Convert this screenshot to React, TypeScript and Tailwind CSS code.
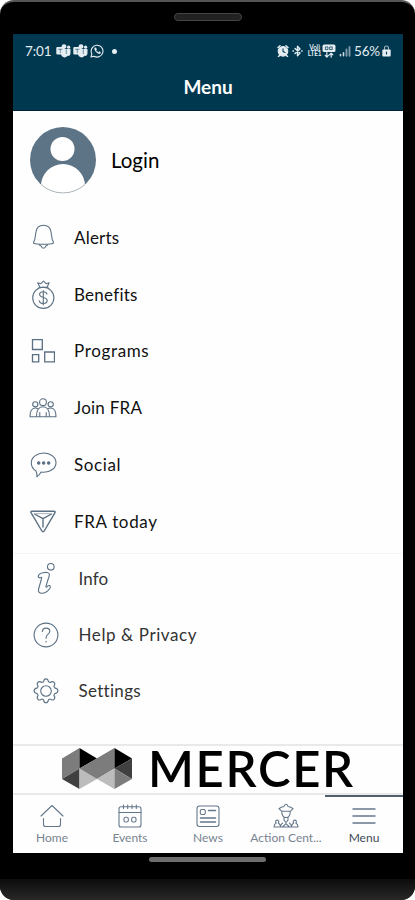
import type { ReactNode } from "react";

function Glyph({ box, className, children }: { box: string; className: string; children: ReactNode }) {
  return (
    <svg viewBox={box} className={className} fill="none" stroke="currentColor" strokeWidth="1.1" strokeLinecap="round" strokeLinejoin="round">
      {children}
    </svg>
  );
}

function Teams() {
  return (
    <Glyph box="0 0 15 14" className="h-[14px] w-[15px] shrink-0">
      <g fill="currentColor" stroke="none">
        <circle cx="8" cy="2.6" r="2.4" />
        <circle cx="12.6" cy="3.2" r="1.6" />
        <path d="M5 5h9.5v4.5a2.5 2.5 0 0 1-3 2.3A3.6 3.6 0 0 1 5 10.500z" />
        <rect x="0.300" y="3" width="8" height="7.500" rx="1" />
      </g>
      <path d="M2.500 5.300h3.600M4.300 5.300v3.400M10.300 5.600v4" stroke="#003850" strokeWidth="0.500" />
    </Glyph>
  );
}

function StatusBar() {
  return (
    <div className="flex h-[34px] shrink-0 items-center pl-[12px] pr-[12px] text-[#e4edf2]">
      <span className="w-[27px] whitespace-nowrap text-[13.5px] tracking-[-0.1px]">7:01</span>
      <div className="ml-[4px] flex items-center gap-[2px]">
        <Teams />
        <Teams />
        <Glyph box="0 0 14 14" className="h-[14px] w-[14px]">
          <path d="M1 13l.8-3.200A5.900 5.900 0 1 1 4 12.200z" />
          <path d="M4.700 4c-.7 1.800 2 5.400 4.800 5.700 1.200-.2 1.200-1.200.8-1.500l-1.200-.6-.8.8C7.200 8 6.400 7.200 6 6.200l.6-.8L6 4.100z" fill="currentColor" strokeWidth="0.500" />
        </Glyph>
      </div>
      <span className="ml-[8px] h-[5px] w-[5px] rounded-full bg-[#e4edf2]" />
      <div className="ml-auto flex items-center">
        <Glyph box="0 0 12 12" className="h-[12px] w-[12px]">
          <circle cx="6" cy="6.300" r="4.800" fill="currentColor" />
          <path d="M1 2.500l2-1.700M11 2.500L9 .8M2.500 10.500l-1 1M9.500 10.500l1 1" strokeWidth="1.500" />
          <path d="M6 3.800v2.800l2 1" stroke="#003850" />
        </Glyph>
        <Glyph box="0 0 11 12" className="ml-[3px] h-[12px] w-[11px]">
          <path d="M3 3.500l5 4.500-2.500 2.700V1.300L8 4 3 8.500" strokeWidth="1.400" />
          <path d="M1 6h.5M9.700 6h.4" strokeWidth="1.500" />
        </Glyph>
        <div className="ml-[4px] flex w-[15px] flex-col items-center text-[6.5px] font-bold leading-[6px] tracking-[-0.1px]">
          <span>Vo))</span>
          <span>LTE1</span>
        </div>
        <Glyph box="0 0 13 13" className="h-[14px] w-[14px]">
          <rect x="0.500" y="0.500" width="12" height="7" rx="1.500" fill="currentColor" stroke="none" />
          <path d="M3.500 2.700h2v2.500h-2zM7.500 2.700h2v2.500h-2z" stroke="#003850" strokeWidth="0.700" />
          <path d="M4.500 8v4M3 10.500l1.500 1.700L6 10.500M8.500 12.200V8.500M7 10l1.500-1.500L10 10" />
        </Glyph>
        <Glyph box="0 0 12 11" className="ml-[3px] h-[11px] w-[12px]">
          <path d="M1.500 9.800v-1.300M4.500 9.800V6.700" strokeWidth="1.600" opacity="0.900" />
          <path d="M7.500 9.800V3.500M10.500 9.800V1" strokeWidth="1.900" opacity="0.550" />
        </Glyph>
        <span className="ml-[3px] whitespace-nowrap text-[13.5px] tracking-[-0.2px]">56%</span>
        <Glyph box="0 0 9 12" className="ml-[2px] h-[12px] w-[9px]">
          <path d="M2.500 5V3a2 2 0 0 1 4 0v2" opacity="0.700" />
          <rect x="0.300" y="4.500" width="8.400" height="7" rx="1" fill="currentColor" stroke="none" />
          <path d="M4.500 7v2" stroke="#003850" />
        </Glyph>
      </div>
    </div>
  );
}

const bell = (
  <Glyph box="0 0 24 28" className="h-[28px] w-[24px]">
    <path d="M2.700 20.300V18.500L3.700 17l1.300-8C5.600 4.800 8.300 2.300 12.500 2.300S19.400 4.800 20 9l1.300 8 1 1.500v1.800c-3.200 1.300-16.400 1.300-19.600 0z" />
    <path d="M8.300 21.500c.2 1.200 1.200 1.300 1.900 1.500.3 1.300 1 2.200 2.300 2.200s2-.9 2.300-2.200c.7-.2 1.700-.3 1.900-1.500" />
  </Glyph>
);
const bag = (
  <Glyph box="0 0 24 29" className="h-[29px] w-[24px]">
    <circle cx="12.300" cy="17.800" r="10.600" />
    <path d="M8.800 7.300L6.800 2.700l3 1L12.500 1.200l2.600 2.500 3-1-2 4.600" />
    <path d="M8 7.300h9" />
    <path d="M16 14c-.5-1.500-1.800-2.200-3.700-2.200-2.100 0-3.700.9-3.700 2.700 0 3.900 7.600 2.100 7.600 6 0 2-1.800 3-3.900 3-2.300 0-3.700-.9-4.100-2.700M12.300 10.500v14.500" />
  </Glyph>
);
const squares = (
  <Glyph box="0 0 24 24" className="h-[24px] w-[24px]">
    <g strokeLinejoin="miter" strokeWidth="1.300">
      <path d="M1.500 .700h9.800v9.800H1.500zM13.700 13h9.800v9.800h-9.800zM1.500 15.700h6.200v7.100H1.500z" />
    </g>
  </Glyph>
);
const people = (
  <Glyph box="0 0 28 20" className="h-[20px] w-[28px]">
    <circle cx="14" cy="4.200" r="3.400" />
    <circle cx="6.300" cy="6.300" r="2.600" />
    <circle cx="21.700" cy="6.300" r="2.600" />
    <path d="M7.500 18.700c0-6 2-10 6.500-10s6.500 4 6.500 10M1 18.700c0-4.700 1.500-8.700 5.300-8.700 1.300 0 2.200.3 3 .9M27 18.700c0-4.700-1.500-8.700-5.300-8.700-1.300 0-2.200.3-3 .9M1 18.700h26M10.800 18.500v-4M17.200 18.500v-4" />
  </Glyph>
);
const chat = (
  <Glyph box="0 0 27 26" className="h-[26px] w-[27px]">
    <path d="M6 19C3 17.300 1.300 14.400 1.300 10.800 1.300 5.300 6.900 1 13.700 1S26 5.300 26 10.800s-5.500 9.400-12.300 9.400c-1 0-1.800 0-2.600-.2-1.300 2.200-2.400 3.600-4.200 4.800.2-2.100 0-4-.9-5.800z" />
    <g fill="currentColor"><circle cx="8.700" cy="11" r="1.200" /><circle cx="13.700" cy="11" r="1.200" /><circle cx="18.700" cy="11" r="1.200" /></g>
  </Glyph>
);
const triangle = (
  <Glyph box="0 0 26 23" className="h-[23px] w-[26px]">
    <path d="M2 1.200h22c1 0 1.400.7 1 1.500L14.200 21c-.6 1-1.700 1-2.300 0L1 2.700C.6 1.900 1 1.200 2 1.200z" strokeWidth="1.400" />
    <path d="M4.500 4l8.500 4.700L21.500 4M13 8.700V17" strokeWidth="1.400" />
    <path d="M6 3.600h14" strokeWidth="0.500" />
  </Glyph>
);
const info = (
  <Glyph box="0 0 20 34" className="mr-[2px] h-[34px] w-[20px]">
    <circle cx="15.800" cy="4.800" r="3.300" />
    <path d="M3.200 14.500c.2-1.800 1.800-3.200 4.600-3.800 3.300-.8 6.500-.3 6.600 1.900 0 1.400-.6 2.900-1.200 4.400l-2.200 7.200c-.3 1 .2 1.200.9.600.7-.7 1.800-1.500 2.700-1.200 1.100.4.900 1.700.1 2.900-1.700 2.600-4.800 4.700-7.800 4.700-2.700 0-4-1.500-3.300-4.200l3-10.700c.3-1-.1-1.300-.8-.8-.8.500-2.300.2-2.600-1z" />
  </Glyph>
);
const help = (
  <Glyph box="0 0 26 26" className="h-[26px] w-[26px]">
    <circle cx="13" cy="13" r="11.900" />
    <path d="M9.300 9.500c.2-2.200 1.600-3.400 3.800-3.400 2.100 0 3.700 1.200 3.700 3.200 0 2.800-3.700 3-3.700 6.400v.6M13.100 19.300v.6" />
  </Glyph>
);
const gear = (
  <Glyph box="0 0 26 26" className="h-[26px] w-[26px]">
    <circle cx="13" cy="13" r="5.300" />
    <path d="M10.500 3.800c.3-1.700.8-2.900 2.500-2.900s2.200 1.200 2.500 2.900l1.700.7c1.400-1 2.700-1.400 3.900-.2s.8 2.500-.2 3.900l.7 1.700c1.700.3 3.300.9 3.300 2.900s-1.600 2.600-3.300 2.900l-.7 1.700c1 1.400 1.400 2.700.2 3.900s-2.500.8-3.900-.2l-1.700.7c-.3 1.700-.8 2.900-2.500 2.900s-2.200-1.200-2.500-2.900l-1.700-.7c-1.400 1-2.700 1.400-3.900.2s-.8-2.500.2-3.900l-.7-1.700C2.700 15.400 1.100 14.800 1.100 12.800s1.600-2.600 3.300-2.900l.7-1.700c-1-1.400-1.400-2.700-.2-3.900s2.500-.8 3.900.2z" />
  </Glyph>
);

const mainItems = [
  { label: "Alerts", icon: bell, track: "tracking-[0.2px]" },
  { label: "Benefits", icon: bag, track: "tracking-[0.25px]" },
  { label: "Programs", icon: squares, track: "tracking-[0.65px]" },
  { label: "Join FRA", icon: people, track: "tracking-[0.25px]" },
  { label: "Social", icon: chat, track: "tracking-[0.6px]" },
  { label: "FRA today", icon: triangle, track: "tracking-[0.65px]" },
];
const moreItems = [
  { label: "Info", icon: info, track: "tracking-[0.1px]" },
  { label: "Help & Privacy", icon: help, track: "tracking-[0.6px]" },
  { label: "Settings", icon: gear, track: "tracking-[0.3px]" },
];

const tabs = [
  {
    label: "Home",
    icon: (
      <Glyph box="0 0 24 24" className="h-[24px] w-[24px]">
        <path d="M1 12L12 1.500 23 12M3.500 14.500v6c0 1.200.8 2 2 2h13c1.200 0 2-.8 2-2v-6" />
      </Glyph>
    ),
  },
  {
    label: "Events",
    icon: (
      <Glyph box="0 0 24 24" className="h-[24px] w-[24px]">
        <rect x="1" y="2.700" width="22" height="20.300" rx="2" />
        <path d="M1 8.500h22M5.500 1v3.500M9.700 1v3.500M14 1v3.500M18.300 1v3.500" />
        <rect x="6" y="13.200" width="4.300" height="4.800" rx="1.500" />
        <rect x="13.700" y="13.200" width="4.300" height="4.800" rx="1.500" />
      </Glyph>
    ),
  },
  {
    label: "News",
    icon: (
      <Glyph box="0 0 24 24" className="h-[24px] w-[24px]">
        <rect x="1" y="2" width="22" height="20.500" rx="2.500" />
        <rect x="4.300" y="5.500" width="5" height="5" rx="1.500" />
        <path d="M12.500 6.500h7M4.500 14h15M4.500 18h15" strokeWidth="1.500" />
      </Glyph>
    ),
  },
  {
    label: "Action Cent...",
    icon: (
      <Glyph box="0 0 26 25" className="h-[25px] w-[26px]">
        <path d="M11 3.500c.3-1.300 1-2.300 2-2.300s1.700 1 2 2.300c2 .2 3.700.9 5 2.200l-2.500 2.500h-9L6 5.700c1.300-1.300 3-2 5-2.200zM8.700 8.200c0 3.600 1.600 6.300 4.300 6.300s4.300-2.700 4.300-6.300M11 14.500v2.700l2 2.300 2-2.300v-2.700" />
        <path d="M1 24c0-2 .8-3.300 2.200-4a1.600 1.600 0 1 1 2 0c1 .5 1.800 1.500 2.300 3 .5-1.500 1.100-2.500 2.200-3M25 24c0-2-.8-3.300-2.200-4a1.600 1.600 0 1 0-2 0c-1 .5-1.800 1.500-2.300 3-.5-1.500-1.100-2.500-2.200-3M1 24h24M9.500 24l3.500-3.300 3.500 3.300" />
      </Glyph>
    ),
  },
  {
    label: "Menu",
    icon: (
      <Glyph box="0 0 24 24" className="h-[24px] w-[24px]">
        <path d="M1 5h22M1 12h22M1 19h22" strokeWidth="1.400" />
      </Glyph>
    ),
  },
];

function Mercer() {
  return (
    <svg viewBox="0 0 70 41" className="h-[41px] w-[70px] shrink-0">
      <path d="M0 10.500L17.500 0v20.500L0 31z" fill="#7c7c7c" />
      <path d="M17.500 0L35 10.500 17.500 20.500z" fill="#000" />
      <path d="M0 31l17.500-10.500V41z" fill="#404040" />
      <path d="M17.500 20.500L35 31 17.500 41z" fill="#bcbcbc" />
      <path d="M17.500 20.500L52.500 0v20.500L35 31z" fill="#7c7c7c" />
      <path d="M52.500 0L70 10.500 52.500 20.500z" fill="#000" />
      <path d="M70 10.500V31L52.500 20.500z" fill="#404040" />
      <path d="M35 31l17.500-10.500V41z" fill="#bcbcbc" />
      <path d="M52.500 20.500L70 31 52.500 41z" fill="#7c7c7c" />
    </svg>
  );
}

export default function App() {
  return (
    <div className="h-[900px] w-[415px] overflow-hidden bg-white font-['Lato','Noto_Sans',sans-serif]">
      <div className="flex h-[900px] flex-col overflow-hidden rounded-[14px] border-t-[2px] border-[#555] bg-black">
        <div className="flex h-[32px] shrink-0 justify-center pt-[11px]">
          <div className="h-[8px] w-[68px] rounded-full border border-[#444] bg-[#222]" />
        </div>
        <main className="ml-[13px] flex h-[819px] w-[390px] shrink-0 flex-col bg-[#fefefe]">
          <header className="flex h-[77px] shrink-0 flex-col border-b border-[#002238] bg-[#003850] text-white">
            <StatusBar />
            <h1 className="mt-[6px] text-center text-[19px] font-bold leading-[26px]">Menu</h1>
          </header>
          <div className="flex h-[98px] shrink-0 items-center pl-[16px]">
            <svg viewBox="0 0 68 68" className="h-[68px] w-[68px]">
              <clipPath id="face"><circle cx="34" cy="34" r="33" /></clipPath>
              <circle cx="34" cy="34" r="33" fill="#5d7486" />
              <g clipPath="url(#face)" fill="#fff">
                <circle cx="33.500" cy="23" r="12" />
                <ellipse cx="34" cy="60" rx="22" ry="22" />
              </g>
              <path d="M12 58.500a33 33 0 0 0 44 0" fill="none" stroke="#a5adb2" strokeWidth="0.800" />
            </svg>
            <span className="ml-[14px] text-[20.5px] text-black">Login</span>
          </div>
          <nav className="flex h-[345px] shrink-0 flex-col border-b border-[#f5f5f5]">
            {mainItems.map((item) => (
              <div key={item.label} className="flex h-[56.9px] shrink-0 items-center">
                <div className="ml-[15px] flex w-[30px] justify-center text-[#5b7083]">{item.icon}</div>
                <span className={"ml-[16px] whitespace-nowrap text-[17px] text-[#111] " + item.track}>{item.label}</span>
              </div>
            ))}
          </nav>
          <nav className="flex h-[190px] shrink-0 flex-col">
            {moreItems.map((item) => (
              <div key={item.label} className="flex h-[56px] shrink-0 items-center pb-[6px]">
                <div className="ml-[18px] flex w-[30px] justify-center text-[#5b7083]">{item.icon}</div>
                <span className={"ml-[17.5px] whitespace-nowrap text-[17px] text-[#333] " + item.track}>{item.label}</span>
              </div>
            ))}
          </nav>
          <div className="flex h-[51px] shrink-0 items-center border-y-[2px] border-[#e9e9e7] pb-[3px] pl-[49px]">
            <Mercer />
            <span className="ml-[16px] text-[49px] font-semibold leading-[45px] tracking-[1.7px] text-black">MERCER</span>
          </div>
          <footer className="flex flex-1">
            {tabs.map((tab) => (
              <div key={tab.label} className={"flex w-[78px] shrink-0 flex-col items-center border-t-[2px] " + (tab.label === "Menu" ? "border-[#50606e] text-[#3f4a56]" : "border-transparent text-[#768390]")}>
                <div className="mt-[6px] flex h-[25px] items-center text-[#64778a]">{tab.icon}</div>
                <span className="mt-[2px] whitespace-nowrap text-[12px] leading-[15px]">{tab.label}</span>
              </div>
            ))}
          </footer>
        </main>
        <div className="flex h-[26px] shrink-0 justify-center pt-[4px]">
          <div className="h-[5px] w-[117px] rounded-full bg-[#6d6d6d]" />
        </div>
        <div className="flex-1 bg-gradient-to-b from-[#0c0c0c] to-[#292929]" />
      </div>
    </div>
  );
}
